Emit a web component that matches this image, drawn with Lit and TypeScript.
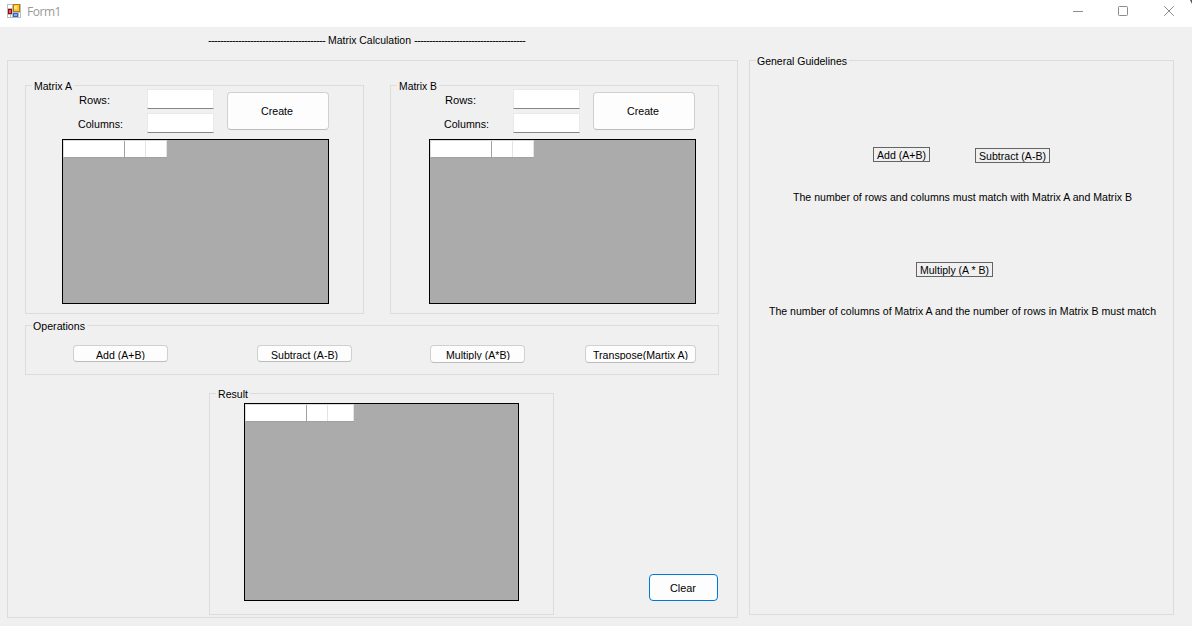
import { LitElement, html, css } from "lit";
import { customElement, property } from "lit/decorators.js";
import { styleMap } from "lit/directives/style-map.js";

/** Single line of text fitted to a given width, by condensing the glyphs or, for rules of dashes, the tracking. */
@customElement("fit-text")
class FitText extends LitElement {
  @property() text = "";
  @property({ type: Number }) w = 0;
  @property({ type: Boolean }) track = false;
  static styles = css`
    :host { display: block; flex: none; height: 13px; line-height: 13px; white-space: pre; }
    .t { display: inline-block; white-space: pre; transform-origin: 0 0; }
  `;
  updated() {
    const t = this.renderRoot.querySelector(".t") as HTMLElement;
    t.style.transform = "none";
    t.style.letterSpacing = "0px";
    const natural = t.getBoundingClientRect().width;
    this.style.width = `${this.w}px`;
    if (this.track) t.style.letterSpacing = `${(this.w - natural) / this.text.length}px`;
    else t.style.transform = `scaleX(${this.w / natural})`;
  }
  render() {
    return html`<span class="t">${this.text}</span>`;
  }
}

@customElement("group-box")
class GroupBox extends LitElement {
  @property() caption = "";
  @property({ type: Number }) w = 0;
  static styles = css`
    :host { display: flex; flex-direction: column; box-sizing: border-box; border: 1px solid #dcdcdc; }
    .legend { align-self: flex-start; height: 13px; margin: -6px 0 -7px 6px; padding: 0 2px 0 1px; background: #f0f0f0; }
    :host([inset]) .legend { padding-left: 2px; }
  `;
  render() {
    return html`${this.caption
        ? html`<div class="legend"><fit-text .text=${this.caption} .w=${this.w}></fit-text></div>`
        : ""}<slot></slot>`;
  }
}

@customElement("data-grid")
class DataGrid extends LitElement {
  @property({ type: Number }) last = 20;
  static styles = css`
    :host { display: block; box-sizing: border-box; border: 1px solid #000; background: #ababab; }
    .row { display: flex; height: 18px; box-sizing: border-box; width: max-content;
      border-top: 1px solid #dcdcdc; border-left: 1px solid #dcdcdc; border-bottom: 1px solid #a0a0a0; }
    .cell { background: #fff; border-right: 1px solid #e3e3e3; }
    .head { width: 60px; border-right-color: #a0a0a0; }
    .mid { width: 20px; }
  `;
  render() {
    return html`<div class="row">
      <div class="cell head"></div>
      <div class="cell mid"></div>
      <div class="cell" style=${styleMap({ width: `${this.last}px` })}></div>
    </div>`;
  }
}

@customElement("matrix-panel")
class MatrixPanel extends LitElement {
  static styles = css`
    :host { display: block; }
    .form { display: grid; grid-template-columns: 69px 67px 102px; grid-template-rows: 20px 20px; row-gap: 4px; column-gap: 0; }
    .lbl { padding-top: 5px; }
    .rows { padding-left: 1px; }
    input { box-sizing: border-box; width: 67px; height: 20px; margin: 0; padding: 0 3px; border: 1px solid #e9e9e9;
      border-bottom-color: #868686; background: #fff; outline: none; border-radius: 0; }
    .create { grid-column: 3; grid-row: 1 / 3; box-sizing: border-box; width: 102px; height: 38px; margin: 3px 0 0 13px;
      border: 1px solid #d0d0d0; border-bottom-color: #bcbcbc; border-radius: 4px; background: #fdfdfd;
      display: flex; justify-content: center; padding: 12px 2px 0 0; font: inherit; color: inherit; }
  `;
  render() {
    return html`<div class="form">
      <div class="lbl rows"><fit-text text="Rows:" .w=${31}></fit-text></div>
      <input aria-label="Rows" />
      <button class="create"><fit-text text="Create" .w=${32}></fit-text></button>
      <div class="lbl"><fit-text text="Columns:" .w=${45}></fit-text></div>
      <input aria-label="Columns" />
    </div>`;
  }
}

@customElement("app-root")
class AppRoot extends LitElement {
  static styles = css`
    :host { display: flex; flex-direction: column; width: 1192px; height: 626px; overflow: hidden; background: #f0f0f0;
      color: #000; font: 11.5px/13px "Liberation Sans", Arial, sans-serif; }
    .bar { display: flex; flex: none; box-sizing: border-box; height: 27px; background: #fff; padding-left: 7px; }
    .logo { margin-top: 4px; width: 14px; height: 14px; flex: none; }
    .name { margin: 4px 0 0 6px; font: 12px/16px "Open Sans", sans-serif; color: #999; }
    .win { width: 119px; height: 27px; flex: none; display: block; margin-left: auto; }
    .banner { display: flex; flex: none; height: 33px; box-sizing: border-box; padding: 7px 0 0 208px; }
    .title { margin: 0 3px 0 3px; }
    .body { display: flex; gap: 11px; align-items: flex-start; padding-left: 7px; }
    .main { width: 731px; height: 558px; }
    .guide { width: 425px; height: 555px; }
    .pair { display: flex; gap: 26px; padding: 24px 0 0 17px; }
    .a { width: 339px; height: 229px; }
    .b { width: 329px; height: 229px; }
    .form { margin: 3px 0 0 52px; }
    .formb { margin: 3px 0 0 53px; }
    .grid { width: 267px; height: 165px; margin: 6px 0 0 36px; }
    .gridb { margin-left: 38px; }
    .ops { width: 694px; height: 50px; margin: 11px 0 0 17px; }
    .opsrow { display: flex; align-items: flex-start; padding: 19px 0 0 47px; }
    .op { flex: none; box-sizing: border-box; width: 95px; height: 17px; border: 1px solid #d0d0d0; border-bottom-color: #bcbcbc;
      border-radius: 4px; background: #fdfdfd; display: flex; justify-content: center; padding: 3px 0 0; font: inherit; color: inherit; }
    .clip { height: 11px; overflow: hidden; }
    .tall { height: 18px; }
    .sub { margin-left: 89px; }
    .mul { margin-left: 78px; }
    .tr { margin-left: 60px; width: 111px; }
    .low { display: flex; padding: 18px 0 0 201px; align-items: flex-start; }
    .res { width: 345px; height: 222px; }
    .rgrid { width: 275px; height: 198px; margin: 9px 0 0 34px; }
    .clear { box-sizing: border-box; width: 69px; height: 27px; margin: 181px 0 0 95px; border: 1px solid #0078d4;
      border-radius: 4px; background: #fdfdfd; display: flex; justify-content: center; padding: 7px 1px 0 0; font: inherit; color: inherit; }
    .tags { display: flex; gap: 45px; padding: 86px 0 0 123px; align-items: flex-start; }
    .tag { box-sizing: border-box; width: 57px; height: 15px; border: 1px solid #646464; padding: 1px 0 0 3px; }
    .tag.s { width: 75px; margin-top: 1px; }
    .tag.m { width: 77px; margin: 58px 0 0 166px; }
    .l1 { margin: 28px 0 0 43px; }
    .l2 { margin: 28px 0 0 19px; }
  `;

  private op(text: string, w: number, cls: string) {
    return html`<button class="op ${cls}"><div class="clip"><fit-text .text=${text} .w=${w}></fit-text></div></button>`;
  }

  render() {
    return html`
      <div class="bar">
        <svg class="logo" viewBox="0 0 14 14" shape-rendering="crispEdges">
          <rect width="14" height="14" fill="#bdbdbd" />
          <rect x="1" y="1" width="4" height="3" fill="#fff" />
          <rect x="1" y="11" width="2" height="2" fill="#fff" />
          <rect x="4" y="11" width="1" height="2" fill="#fff" />
          <rect x="12" y="9" width="1" height="4" fill="#fff" />
          <rect x="6" y="0" width="7" height="8" fill="#b07d0c" />
          <rect x="7" y="1" width="5" height="6" fill="#fcc62c" />
          <rect x="7" y="2" width="3" height="3" fill="#ffe480" />
          <rect x="1" y="5" width="4" height="5" fill="#8c1010" />
          <rect x="2" y="6" width="2" height="3" fill="#dc5a50" />
          <rect x="6" y="9" width="5" height="4" fill="#2d66d2" />
          <rect x="7" y="10" width="3" height="2" fill="#7eacff" />
        </svg>
        <fit-text class="name" text="Form1" track .w=${34}></fit-text>
        <svg class="win" viewBox="0 0 119 27" fill="none" stroke="#8c8c8c">
          <path d="M0 11.5H10" shape-rendering="crispEdges" />
          <rect x="45.5" y="6.5" width="9" height="9" rx="0.8" />
          <path d="M91.2 6.2L100.8 15.8M100.8 6.2L91.2 15.8" />
          <path d="M117 0H119V4Z" fill="#555" stroke="none" />
        </svg>
      </div>
      <div class="banner">
        <fit-text track .text=${"-".repeat(39)} .w=${117}></fit-text>
        <fit-text class="title" text="Matrix Calculation" .w=${83}></fit-text>
        <fit-text track .text=${"-".repeat(37)} .w=${111}></fit-text>
      </div>
      <div class="body">
        <group-box class="main">
          <div class="pair">
            <group-box class="a" inset caption="Matrix A" .w=${38}>
              <matrix-panel class="form"></matrix-panel>
              <data-grid class="grid"></data-grid>
            </group-box>
            <group-box class="b" inset caption="Matrix B" .w=${38}>
              <matrix-panel class="formb"></matrix-panel>
              <data-grid class="grid gridb"></data-grid>
            </group-box>
          </div>
          <group-box class="ops" caption="Operations" .w=${52}>
            <div class="opsrow">
              ${this.op("Add (A+B)", 49, "")}
              ${this.op("Subtract (A-B)", 67, "sub")}
              ${this.op("Multiply (A*B)", 64, "mul tall")}
              ${this.op("Transpose(Martix A)", 95, "tr tall")}
            </div>
          </group-box>
          <div class="low">
            <group-box class="res" inset caption="Result" .w=${30}>
              <data-grid class="rgrid" .last=${25}></data-grid>
            </group-box>
            <button class="clear"><fit-text text="Clear" .w=${26}></fit-text></button>
          </div>
        </group-box>
        <group-box class="guide" caption="General Guidelines" .w=${90}>
          <div class="tags">
            <div class="tag"><fit-text text="Add (A+B)" .w=${49}></fit-text></div>
            <div class="tag s"><fit-text text="Subtract (A-B)" .w=${67}></fit-text></div>
          </div>
          <fit-text class="l1" text="The number of rows and columns must match with Matrix A and Matrix B" .w=${339}></fit-text>
          <div class="tag m"><fit-text text="Multiply (A * B)" .w=${69}></fit-text></div>
          <fit-text class="l2" text="The number of columns of Matrix A and the number of rows in Matrix B must match" .w=${387}></fit-text>
        </group-box>
      </div>
    `;
  }
}
